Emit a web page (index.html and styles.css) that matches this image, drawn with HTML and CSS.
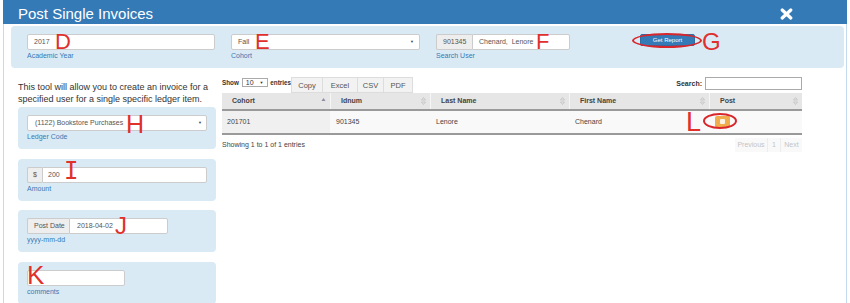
FILE: index.html
```html
<!DOCTYPE html>
<html>
<head>
<meta charset="utf-8">
<title>Post Single Invoices</title>
<link rel="stylesheet" href="styles.css">
</head>
<body>
<div class="modal">
  <div class="modal-header">
    <h1 class="title">Post Single Invoices</h1>
    <svg class="close" width="13" height="12" viewBox="0 0 13 12"><path d="M2.2 2 L10.8 10 M10.8 2 L2.2 10" stroke="#fff" stroke-width="3.2" stroke-linecap="round"/></svg>
  </div>
  <div class="modal-body">
    <div class="filter-panel">
      <div class="field f-year">
        <div class="input">2017</div>
        <div class="label">Academic Year</div>
      </div>
      <div class="field f-cohort">
        <div class="input select">Fall<span class="caret">&#9660;</span></div>
        <div class="label">Cohort</div>
      </div>
      <div class="field f-user">
        <div class="group"><span class="addon a-id">901345</span><span class="input grow">Chenard,&nbsp; Lenore</span></div>
        <div class="label">Search User</div>
      </div>
      <button class="btn-report">Get Report</button>
    </div>

    <div class="main">
      <div class="left">
        <p class="intro">This tool will allow you to create an invoice for a specified user for a single specific ledger item.</p>
        <div class="lpanel">
          <div class="input select wide lsel">(1122) Bookstore Purchases<span class="caret">&#9660;</span></div>
          <div class="label">Ledger Code</div>
        </div>
        <div class="lpanel">
          <div class="group wide"><span class="addon a-dollar">$</span><span class="input grow">200</span></div>
          <div class="label">Amount</div>
        </div>
        <div class="lpanel">
          <div class="group g-date"><span class="addon a-date">Post Date</span><span class="input grow">2018-04-02</span></div>
          <div class="label">yyyy-mm-dd</div>
        </div>
        <div class="lpanel">
          <div class="input comments"></div>
          <div class="label l-comments">comments</div>
        </div>
      </div>

      <div class="right">
        <div class="dt-top">
          <div class="dt-length"><b>Show</b><span class="len-select">10 <span class="len-caret">&#9660;</span></span><b>entries</b></div>
          <div class="dt-buttons">
            <span class="dt-btn b-copy">Copy</span><span class="dt-btn b-excel">Excel</span><span class="dt-btn b-csv">CSV</span><span class="dt-btn b-pdf">PDF</span>
          </div>
          <div class="dt-search"><b>Search:</b><span class="search-input"></span></div>
        </div>
        <div class="thead">
          <div class="th c1">Cohort<svg class="sort" width="5" height="8" viewBox="0 0 5 8"><path d="M2.5 1 L4.5 4 L0.5 4 Z" fill="#8c8ca6"/></svg></div>
          <div class="th c2">Idnum<svg class="sort" width="5" height="8" viewBox="0 0 5 8"><path d="M2.5 0.5 L4.5 3 L0.5 3 Z M2.5 7.5 L4.5 5 L0.5 5 Z" fill="none" stroke="#bdbdbd" stroke-width="0.7"/></svg></div>
          <div class="th c3">Last Name<svg class="sort" width="5" height="8" viewBox="0 0 5 8"><path d="M2.5 0.5 L4.5 3 L0.5 3 Z M2.5 7.5 L4.5 5 L0.5 5 Z" fill="none" stroke="#bdbdbd" stroke-width="0.7"/></svg></div>
          <div class="th c4">First Name<svg class="sort" width="5" height="8" viewBox="0 0 5 8"><path d="M2.5 0.5 L4.5 3 L0.5 3 Z M2.5 7.5 L4.5 5 L0.5 5 Z" fill="none" stroke="#bdbdbd" stroke-width="0.7"/></svg></div>
          <div class="th c5">Post<svg class="sort" width="5" height="8" viewBox="0 0 5 8"><path d="M2.5 0.5 L4.5 3 L0.5 3 Z M2.5 7.5 L4.5 5 L0.5 5 Z" fill="none" stroke="#bdbdbd" stroke-width="0.7"/></svg></div>
        </div>
        <div class="trow">
          <div class="td c1 sorted">201701</div>
          <div class="td c2">901345</div>
          <div class="td c3">Lenore</div>
          <div class="td c4">Chenard</div>
          <div class="td c5"><span class="post-btn"><span class="post-icon"></span></span></div>
        </div>
        <div class="dt-bottom">
          <div class="dt-info">Showing 1 to 1 of 1 entries</div>
          <div class="pager"><span class="pg p-prev">Previous</span><span class="pg p-num">1</span><span class="pg p-next">Next</span></div>
        </div>
      </div>
    </div>
  </div>
</div>

<div class="annot">
  <span class="ltr l-d">D</span>
  <span class="ltr l-e">E</span>
  <span class="ltr l-f">F</span>
  <span class="ltr l-g">G</span>
  <span class="ltr l-h">H</span>
  <span class="ltr l-i">I</span>
  <span class="ltr l-j">J</span>
  <span class="ltr l-k">K</span>
  <span class="ltr l-l">L</span>
  <span class="ring ring-g"></span>
  <span class="ring ring-l"></span>
</div>
</body>
</html>
```

FILE: styles.css
```css
html, body {
  margin: 0;
  padding: 0;
}
body {
  font-family: "Liberation Sans", Arial, sans-serif;
  color: #333;
  background: #fff;
  position: relative;
  width: 850px;
  height: 303px;
  overflow: hidden;
}

.modal {
  width: 844px;
  margin-left: 3px;
}
.modal-header {
  height: 24px;
  background: #337ab7;
  display: flex;
  align-items: center;
  justify-content: space-between;
  padding: 0 54px 0 15px;
  box-sizing: border-box;
}
.title {
  margin: 0;
  padding-top: 2px;
  font-size: 15px;
  font-weight: normal;
  color: #fff;
}
.close {
  display: block;
  margin-top: 3px;
}

.modal-body {
  border-left: 1px solid #c3dbef;
  border-right: 1px solid #c3dbef;
  height: 279px;
  padding: 2px 2px 0 7px;
}

.filter-panel {
  height: 42px;
  box-sizing: border-box;
  background: #d9eaf5;
  border-radius: 4px;
  display: flex;
  align-items: flex-start;
  padding: 8px 0 0 16px;
}
.field {
  display: flex;
  flex-direction: column;
}
.f-year { width: 188px; margin-right: 16px; }
.f-cohort { width: 189px; margin-right: 16px; }
.f-user { width: 134px; }

.input {
  display: block;
  height: 16px;
  box-sizing: border-box;
  border: 1px solid #ccc;
  border-radius: 2px;
  background: #fff;
  font-size: 7px;
  line-height: 14px;
  padding: 0 6px;
  color: #555;
  white-space: nowrap;
}
.select { position: relative; }
.caret {
  position: absolute;
  right: 5px;
  top: 0;
  font-size: 4px;
  color: #444;
}
.label {
  font-size: 7px;
  line-height: 9px;
  margin-top: 1px;
  color: #3a78b3;
}

.group {
  display: flex;
  height: 16px;
}
.addon {
  box-sizing: border-box;
  border: 1px solid #ccc;
  border-right: 0;
  border-radius: 2px 0 0 2px;
  background: #eee;
  font-size: 7px;
  line-height: 14px;
  color: #555;
  white-space: nowrap;
}
.group .input {
  border-radius: 0 2px 2px 0;
}
.grow { flex: 1; }
.a-id { width: 36px; padding-left: 6px; }
.a-dollar { width: 15px; padding-left: 5px; }
.a-date { width: 42px; padding-left: 6px; }

.btn-report {
  margin-left: 70px;
  width: 55px;
  height: 12px;
  padding: 0;
  border: 1px solid #2e6da4;
  border-radius: 2px;
  background: #337ab7;
  color: #fff;
  font-family: "Liberation Sans", Arial, sans-serif;
  font-size: 6px;
  line-height: 10px;
}

.main {
  display: flex;
  padding-left: 7px;
  gap: 6px;
}
.left {
  width: 198px;
  flex: none;
}
.intro {
  margin: 13px 0 2px;
  font-size: 9px;
  line-height: 12px;
  color: #333;
}
.lpanel {
  background: #d9eaf5;
  border-radius: 4px;
  padding: 8px 9px 8px;
  margin-bottom: 9.5px;
}
.lpanel .label { margin-top: 1px; }
.lpanel .l-comments { margin-top: 2px; line-height: 8px; }
.lsel { padding-left: 7px; }
.lsel .caret { right: 4px; }
.wide { width: 180px; }
.a-dollar + .input { padding-left: 5px; }
.g-date { width: 141px; }
.a-date + .input { padding-left: 7px; }
.comments { width: 98px; }

.right {
  width: 580px;
  flex: none;
  margin-top: 9px;
}
.dt-top {
  display: flex;
  align-items: flex-start;
  height: 16px;
  font-size: 7px;
}
.dt-length {
  width: 69px;
  flex: none;
  height: 10px;
  display: flex;
  align-items: center;
  color: #333;
  font-size: 6.3px;
  white-space: nowrap;
}
.len-select {
  display: inline-block;
  width: 28px;
  height: 9px;
  box-sizing: border-box;
  border: 1px solid #aaa;
  margin: 0 2px 0 3px;
  font-size: 7px;
  line-height: 7px;
  padding-left: 3px;
  position: relative;
  background: #fff;
}
.len-caret {
  position: absolute;
  right: 4px;
  top: 0;
  font-size: 4px;
}
.dt-buttons {
  display: flex;
  height: 16px;
}
.dt-btn {
  box-sizing: border-box;
  height: 16px;
  border: 1px solid #ddd;
  border-left: 0;
  background: #f2f2f2;
  font-size: 7.5px;
  line-height: 16px;
  text-align: center;
  color: #555;
}
.b-copy { width: 32px; border-left: 1px solid #ddd; }
.b-excel { width: 35px; }
.b-csv { width: 26px; }
.b-pdf { width: 29px; }
.dt-search {
  margin-left: auto;
  display: flex;
  align-items: center;
  height: 13px;
}
.search-input {
  display: block;
  width: 97px;
  height: 13px;
  box-sizing: border-box;
  border: 1px solid #aaa;
  margin-left: 3px;
  background: #fff;
}

.thead {
  display: flex;
  height: 16px;
  background: #e6e6e6;
  border-bottom: 2px solid #9a9a9a;
}
.th {
  position: relative;
  box-sizing: border-box;
  padding-left: 10px;
  font-size: 7px;
  line-height: 16px;
  font-weight: bold;
  color: #444;
  border-left: 1px solid #f6f6f6;
}
.th.c1 { border-left: 0; }
.sort {
  position: absolute;
  right: 4px;
  top: 4px;
}
.c1 { width: 108px; }
.c2 { width: 100px; }
.c3 { width: 139px; }
.c4 { width: 140px; }
.c5 { width: 93px; }

.trow {
  display: flex;
  height: 22px;
  background: #f9f9fa;
  border-bottom: 2px solid #9a9a9a;
}
.td {
  box-sizing: border-box;
  padding-left: 6px;
  font-size: 7px;
  line-height: 22px;
  color: #444;
}
.td.c1 { padding-left: 5px; }
.sorted { background: #f0f0f0; }
.post-btn {
  display: inline-block;
  vertical-align: top;
  margin-top: 5px;
  width: 15px;
  height: 12px;
  border-radius: 2px;
  background: #f0ad4e;
  position: relative;
}
.post-icon {
  position: absolute;
  left: 5px;
  top: 3px;
  width: 5px;
  height: 5px;
  background: #fdf3e4;
  border-radius: 1px;
}

.dt-bottom {
  display: flex;
  justify-content: space-between;
  margin-top: 3px;
  height: 14px;
}
.dt-info {
  font-size: 7px;
  line-height: 14px;
  color: #444;
}
.pager {
  display: flex;
}
.pg {
  box-sizing: border-box;
  height: 14px;
  font-size: 7px;
  line-height: 14px;
  color: #c4c4c4;
  background: #f9f9f9;
  text-align: center;
  border-left: 1px solid #ededed;
}
.p-prev { width: 32px; border-left: 0; }
.p-num { width: 13px; }
.p-next { width: 22px; }

/* red annotation overlay */
.annot {
  position: absolute;
  left: 0;
  top: 0;
  width: 850px;
  height: 303px;
  pointer-events: none;
}
.ltr {
  position: absolute;
  color: #e0302c;
  font-family: "Liberation Sans", Arial, sans-serif;
  line-height: 0.8;
  font-size: 22px;
}
.l-d { left: 55px; top: 33px; }
.l-e { left: 255px; top: 33px; }
.l-f { left: 536px; top: 33px; }
.l-g { left: 702px; top: 32px; font-size: 24px; }
.l-h { left: 126px; top: 114px; font-size: 25px; }
.l-i { left: 64px; top: 162px; font-size: 24px; font-family: "DejaVu Sans Mono", monospace; }
.l-j { left: 115px; top: 216px; font-size: 24px; }
.l-k { left: 27px; top: 266px; font-size: 26px; line-height: 0.7; }
.l-l { left: 686px; top: 112px; font-size: 27px; }
.ring {
  position: absolute;
  box-sizing: border-box;
  border: 2px solid #d9262b;
  border-radius: 50%;
}
.ring-g { left: 632px; top: 33px; width: 70px; height: 15px; }
.ring-l { left: 703px; top: 113px; width: 34px; height: 16px; }
```
